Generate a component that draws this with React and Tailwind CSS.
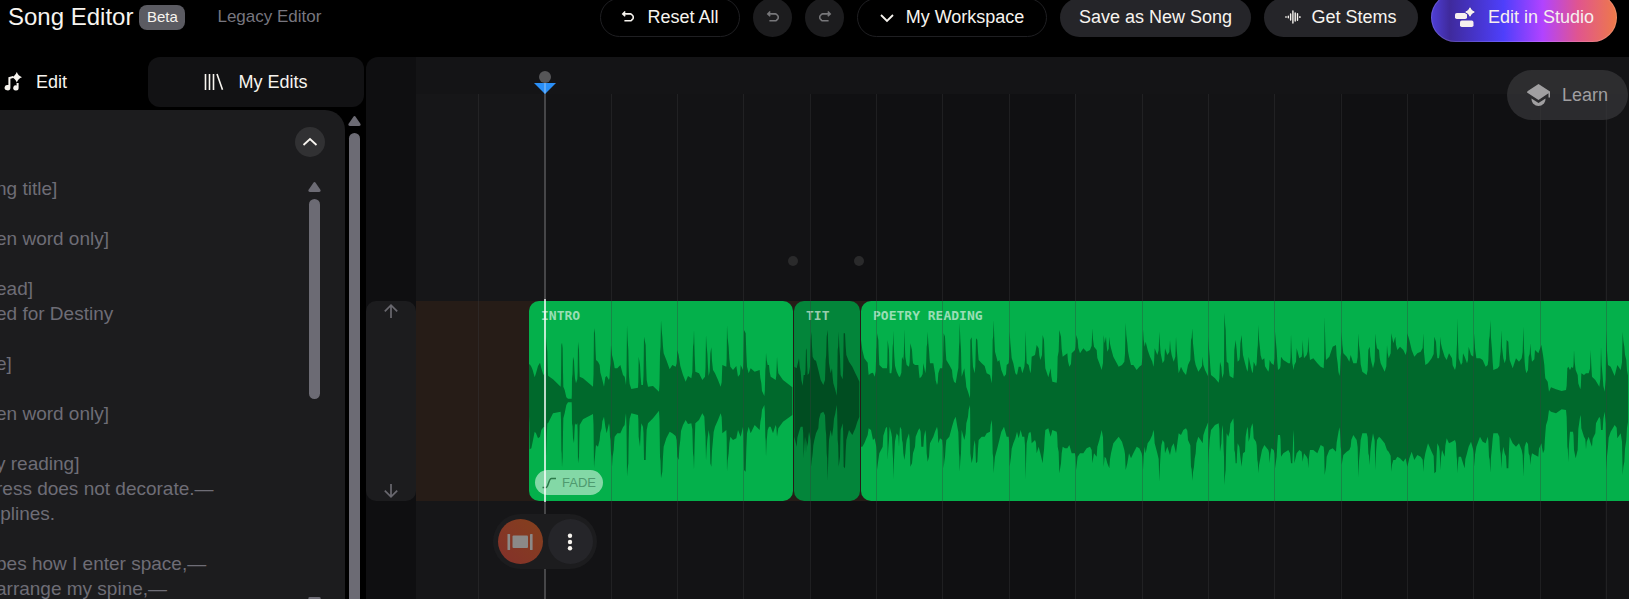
import React from "react";

const INTRO =
  "508,225,380 510,222,478 515,230,475 519,240,455 525,262,425 529,250,430 535,228,445 541,218,440 545,235,420 551,255,412 556,250,410 559,140,500 563,185,400 565,257,400 580,268,370 603,290,365 605,165,480 607,158,532 609,175,500 611,290,385 615,300,370 620,322,345 625,326,337 636,326,337 637,265,400 640,200,445 643,212,460 646,265,400 649,280,405 653,268,400 655,155,520 658,180,500 660,260,405 670,265,388 700,290,372 703,115,535 706,130,500 709,210,465 715,215,470 720,225,450 726,262,415 733,290,380 737,262,410 741,258,430 748,270,400 751,235,440 754,165,490 757,195,530 762,215,480 765,235,440 773,235,430 782,225,430 790,255,412 795,260,405 799,285,370 802,105,560 806,180,520 808,260,410 815,297,370 835,293,375 837,200,440 841,225,470 845,285,400 850,285,410 853,140,510 858,165,510 861,270,420 865,290,400 880,288,385 898,305,362 901,190,500 904,90,565 908,140,545 912,190,470 920,210,445 930,238,425 938,225,430 948,230,438 953,180,500 957,195,510 962,228,450 970,255,405 978,275,390 985,258,402 995,265,400 1000,170,490 1003,120,540 1007,245,400 1018,250,390 1028,270,370 1036,260,420 1039,135,512 1043,190,450 1047,258,420 1052,190,520 1055,172,530 1060,240,450 1066,250,410 1075,270,390 1083,290,370 1088,225,430 1100,230,420 1102,105,545 1107,170,490 1112,230,440 1120,240,450 1130,228,445 1135,260,420 1143,225,440 1150,240,410 1153,120,540 1158,130,545 1162,230,430 1167,250,410 1173,235,430 1185,245,405 1200,240,420 1205,280,380 1214,318,345 1217,240,440 1219,188,500 1224,225,420 1228,225,410 1233,260,410 1240,265,430 1248,270,405 1252,200,440 1256,250,415 1270,270,395 1298,292,375";

const TITLE =
  "43,380,590 50,385,620 57,355,575 62,395,560 68,437,560 71,405,655 75,405,590 78,325,640 80,330,600 83,405,620 87,400,575 92,300,600 94,275,680 98,350,640 103,360,600 108,362,580 115,390,565 122,420,520 130,435,515 137,360,570 140,290,640 143,270,722 147,370,600 152,400,570 156,385,590 160,430,560 166,450,520 170,467,495 173,330,600 176,275,680 180,350,650 182,405,570 188,418,550 191,280,680 195,280,685 199,345,600 207,365,570 217,380,585 226,400,565 232,412,545 238,425,530";

const POETRY_A =
  "243,300,620 247,330,620 253,355,610 263,368,585 266,405,565 273,400,570 279,398,600 284,410,595 289,330,620 291,280,690 295,300,660 298,375,640 308,385,620 317,385,565 321,385,560 323,300,660 327,330,600 329,400,560 334,400,580 338,320,640 340,272,718 343,350,640 350,395,580 357,410,620 360,410,560 366,350,600 370,360,640 373,268,660 376,350,640 380,375,600 387,380,580 391,310,680 396,330,670 399,370,640 405,375,620 415,375,570 419,415,565 424,410,620 430,370,620 436,400,570 440,320,640 443,275,665 447,330,650 450,370,610 460,370,590 465,400,575 471,435,560 475,400,610 480,385,595 487,385,600 491,280,685 495,290,650 499,360,600 508,375,590 516,390,560 522,425,540 527,430,530 532,400,560 537,320,640 539,248,695 543,330,640 545,410,570 553,385,600 557,420,580 564,455,530 570,475,495 571,300,640 575,292,670 579,380,650 584,400,600 588,295,670 592,300,665 596,360,600 605,370,590 614,378,590 620,400,580 630,405,575 635,430,540 638,300,640 641,240,700 645,335,650 653,365,620 658,360,600 664,390,575 672,410,560 680,375,590 686,370,590 689,275,680 693,330,650 700,370,610 706,400,595 711,405,575 716,380,595 722,380,570 727,400,590 733,380,590 737,272,718 740,370,610 746,375,580 751,400,575 755,350,610 765,345,600 770,315,640 776,325,620 781,360,640 788,285,670 792,300,630 796,385,570 805,412,565 812,385,590 817,425,570 830,428,575 833,350,620 838,270,700 843,290,670 848,350,620 855,345,625 862,340,625 868,380,615 875,340,640 885,330,640 889,285,690 893,300,650 900,340,640 910,325,640 920,335,625 930,330,620 937,265,670 942,320,640 950,330,650 958,370,600 965,390,570 971,285,680 974,310,650 978,290,655 982,335,670 988,290,685 993,325,640 1000,350,610 1008,365,600 1016,380,590 1026,375,605 1033,365,630 1037,248,690 1042,310,670 1047,350,640 1053,375,655 1060,375,640 1070,390,620 1078,380,625 1085,375,640 1089,268,690 1094,320,620 1097,305,640 1103,330,610 1110,350,600 1117,365,585 1120,380,570 1124,325,610 1132,345,640 1138,275,725 1142,340,640 1148,370,600 1155,325,640 1162,345,620 1170,300,645 1175,345,620 1181,365,610 1188,290,640 1192,350,610 1196,400,580 1203,380,585 1210,395,570 1218,405,565 1224,375,600 1233,300,680 1237,265,722 1242,340,680 1247,375,640 1255,395,590 1262,385,600 1268,350,610 1275,390,570 1285,410,545";

const POETRY_B =
  "25,140,525 29,200,450 33,255,420 45,265,405 56,278,400 60,215,485 64,230,460 67,265,405 71,250,480 73,68,585 77,120,540 80,215,430 85,220,440 89,258,425 100,265,385 103,180,480 107,150,520 110,180,520 113,215,460 118,210,470 121,160,500 125,135,530 129,195,490 135,220,485 142,245,410 146,200,455 150,220,440 157,250,400 161,215,445 168,230,455 172,180,510 175,105,550 180,175,510 186,210,480 193,205,465 205,245,480 209,210,520 214,220,475 221,225,480 226,125,535 230,180,500 234,240,435 240,235,435 243,200,500 250,210,490 265,220,480 270,220,490 273,133,520 277,220,520 281,240,420 283,225,520 290,175,490 298,205,480 305,200,485 308,150,515 312,205,490 320,195,500 325,140,535 330,210,480 340,205,480 352,220,490 362,230,465 371,235,470 374,80,555 378,210,530 388,200,480 398,170,475 408,165,485 413,220,440 418,258,412 422,200,470 425,125,525 430,190,495 440,200,485 448,215,480 452,195,470 460,220,435 470,220,450 475,130,562 480,190,480 487,245,430 500,255,430 505,180,490 509,170,525 514,215,460 519,235,430 526,130,540 531,175,450 537,180,440 542,220,445 554,245,460 561,165,480 566,205,485 574,130,545 580,160,510 586,140,510 592,180,500 600,170,505 610,180,515 617,195,505 622,130,530 628,150,505 635,180,485 643,200,510 652,190,495 662,185,500 670,130,545 676,225,490 684,220,460 695,205,485 703,140,550 708,155,545 712,205,460 717,205,470 721,140,540 726,175,480 734,200,500 740,210,445 747,190,460 756,205,455 765,240,450 770,180,500 772,85,550 776,205,500 783,225,500 789,190,520 794,200,535 801,220,490 806,170,470 813,195,455 820,200,480 823,130,530 829,205,470 840,205,440 848,210,455 857,230,460 863,225,440 867,150,500 871,90,548 876,180,470 880,240,430 893,235,430 900,200,480 904,120,535 910,205,470 914,220,490 920,150,535 925,155,535 929,210,440 938,235,460 948,205,470 957,215,460 965,205,480 970,110,560 974,215,470 979,250,455 986,200,490 991,160,525 996,215,490 1005,180,495 1015,190,500 1024,165,460 1029,195,490 1033,225,480 1036,265,430 1043,275,390 1047,305,360 1053,292,365 1068,298,370 1085,303,358 1098,300,360 1102,235,470 1105,230,517 1110,240,425 1115,230,425 1119,235,425 1122,180,480 1127,240,505 1133,255,480 1141,298,375 1144,250,415 1152,255,440 1158,250,478 1166,250,440 1172,180,460 1176,260,470 1186,270,430 1198,290,380 1203,170,420 1208,260,420 1214,305,365 1219,118,540 1224,225,470 1232,230,425 1244,258,405 1252,225,445 1262,240,430 1268,125,555 1273,170,515 1279,210,450 1285,262,390";

// Narrows steep transients so that each peak stays a thin needle.
function sharpen(points, sign) {
  const out = [];
  points.forEach(([x, y], i) => {
    out.push([x, y]);
    const next = points[i + 1];
    if (!next) return;
    const [nx, ny] = next;
    const rise = (ny - y) * sign;
    if (Math.abs(rise) < 35) return;
    const reach = Math.min(2, (nx - x) / 2);
    if (rise > 0) out.push([nx - reach, y + (ny - y) * 0.2]);
    else out.push([x + reach, ny + (y - ny) * 0.4]);
  });
  return out;
}

// Turns "x,top,bottom" samples into a closed envelope outline.
function envelope(samples, dx = 0, dy = 0) {
  const pts = samples.split(" ").map((s) => s.split(",").map(Number));
  const upper = sharpen(pts.map(([x, t]) => [x + dx, t + dy]), -1);
  const lower = sharpen(pts.map(([x, , b]) => [x + dx, b + dy]), 1).reverse();
  return `M${upper.join("L")}L${lower.join("L")}Z`;
}

const LYRICS = [
  "ng title]", "", "en word only]", "", "ead]", "ed for Destiny", "", "e]", "",
  "en word only]", "", "y reading]", "ress does not decorate.—", "iplines.", "",
  "bes how I enter space,—", "arrange my spine,—",
];

const BEAT = 66.35;
const GRID = Array.from({ length: 40 }, (_, i) => Math.round(62 + i * BEAT));

const SPARK = "M0 -6Q1.500 -1.500 6 0Q1.500 1.500 0 6Q-1.500 1.500 -6 0Q-1.500 -1.500 0 -6Z";

function UndoIcon({ className }) {
  return (
    <svg className={className} width="14" height="14" viewBox="0 0 14 14" fill="none" stroke="currentColor" strokeWidth="1.6">
      <path d="M4.200 1.500 1.800 3.900l2.400 2.400M2 3.900h7.400a1.500 1.500 0 0 1 1 .4l1.400 1.400a1.500 1.500 0 0 1 .4 1v1.200a1.500 1.500 0 0 1-.4 1l-1.400 1.400a1.500 1.500 0 0 1-1 .4H3.400" />
    </svg>
  );
}

function Triangle({ className }) {
  return (
    <svg className={className} width="13" height="10" viewBox="0 0 13 10" fill="#6c6b74">
      <path d="M5.4.7q1.1-1.2 2.2 0l4.8 7q.9 2.3-1.2 2.3H1.8Q-.3 10 .6 7.7z" />
    </svg>
  );
}

function Clip({ label, clipClass, waveClass, width, viewBox, paths, children }) {
  return (
    <div className={`relative h-full overflow-hidden ${clipClass}`}>
      <svg className={`block h-full ${waveClass}`} width={width} height="200" viewBox={viewBox} fill="currentColor" preserveAspectRatio="none">
        {paths.map((d) => <path key={d.slice(0, 20)} d={d} />)}
      </svg>
      <span className="absolute left-3 top-[7px] font-['DejaVu_Sans_Mono',monospace] text-[13px] leading-4 font-bold text-white/60 whitespace-nowrap">
        {label}
      </span>
      {children}
    </div>
  );
}

function Header() {
  const pill = "flex h-[39px] shrink-0 items-center justify-center rounded-full text-lg whitespace-nowrap";
  return (
    <header className="flex h-[57px] shrink-0 pb-[23px]">
      <div className="flex h-[34px] items-center pl-2">
        <h1 className="text-2xl whitespace-nowrap">Song Editor</h1>
        <span className="ml-1.5 flex h-[25px] w-[46px] items-center justify-center rounded-lg bg-[#5b5b62] text-[15px]">Beta</span>
        <a href="#legacy" className="ml-8 text-[17px] text-[#77767f] whitespace-nowrap">Legacy Editor</a>
      </div>
      <div className="ml-auto flex h-[34px] items-center gap-[13px] pr-3">
        <button className={`${pill} w-[140px] gap-3 border border-[#1f1f22]`}>
          <UndoIcon />Reset All
        </button>
        <button aria-label="Undo" className={`${pill} w-[39px] bg-[#1c1c1e] text-[#77777a]`}><UndoIcon /></button>
        <button aria-label="Redo" className={`${pill} w-[39px] bg-[#1c1c1e] text-[#77777a]`}><UndoIcon className="-scale-x-100" /></button>
        <button className={`${pill} w-[190px] gap-3 border border-[#1f1f22]`}>
          <svg width="14" height="14" viewBox="0 0 14 14" fill="none" stroke="currentColor" strokeWidth="1.800"><path d="m1 5 6 6 6-6" /></svg>
          My Workspace
        </button>
        <button className={`${pill} w-[191px] bg-[#252529]`}>Save as New Song</button>
        <button className={`${pill} w-[154px] gap-2.5 bg-[#252529]`}>
          <svg width="16" height="16" viewBox="0 0 16 16" fill="none" stroke="currentColor" strokeWidth="1.400" strokeLinecap="round">
            <path d="M1 7.800v.4M3.300 7.200v1.600M5.600 5v6M7.900 2v12M10.200 4v8M12.500 4.800v6.400M14.900 7.600v.8" />
          </svg>
          Get Stems
        </button>
        <button className="flex h-[49px] w-[186px] shrink-0 items-center justify-center gap-3 rounded-full border border-white/15 bg-[linear-gradient(90deg,#4f3fd8_0%,#3f2a9c_10%,#4e3ffb_39%,#b143ff_60%,#e0558f_79%,#ee7a48_100%)] bg-origin-border text-lg whitespace-nowrap text-[#f6efee]">
          <svg width="22" height="22" viewBox="0 0 22 22" fill="currentColor">
            <rect x="1" y="7" width="12" height="6" rx="1.8" />
            <rect x="6" y="14.6" width="13.5" height="6.4" rx="1.8" />
            <path stroke="#4030b4" d="M16 0Q17.400 4.600 22 6 17.400 7.400 16 12 14.600 7.400 10 6 14.600 4.600 16 0Z" />
          </svg>
          Edit in Studio
        </button>
      </div>
    </header>
  );
}

function Sidebar() {
  return (
    <aside className="flex w-[366px] shrink-0 flex-col">
      <div className="flex h-[50px] shrink-0 pr-0.5">
        <button className="flex flex-1 items-center gap-3.5 pl-0.5 text-lg">
          <svg width="20" height="20" viewBox="0 0 20 20" fill="currentColor">
            <path d="M6.400 5.200 11 4v2L8.400 6.800v8.900a2.900 2.700 0 1 1-2-2.600z" />
            <path d="M14.600 11h2v4.900a2.700 2.500 0 1 1-2-2.400z" />
            <path d={SPARK} transform="translate(14.8 5.200) scale(.88)" />
          </svg>
          Edit
        </button>
        <button className="flex w-[216px] items-center justify-center gap-3.5 rounded-xl bg-[#121214] text-lg">
          <svg width="20" height="18" viewBox="0 0 20 18" fill="none" stroke="currentColor" strokeWidth="1.6">
            <path d="M1.500 1v16M5.500 1v16M9.500 1v16M13 1l5.500 15.800" />
          </svg>
          My Edits
        </button>
      </div>
      <div className="mt-[3px] flex min-h-0 flex-1">
        <section className="flex w-[345px] flex-col overflow-hidden rounded-tr-[20px] bg-[#1c1c1e]">
          <div className="flex justify-end pt-[17px] pr-5">
            <button aria-label="Collapse" className="flex size-[30px] items-center justify-center rounded-full bg-[#313133]">
              <svg width="16" height="10" viewBox="0 0 16 10" fill="none" stroke="currentColor" strokeWidth="1.800"><path d="m1.500 8 6.500-6 6.500 6" /></svg>
            </button>
          </div>
          <div className="mt-[18px] flex min-h-0 flex-1">
            <div className="-ml-1 flex-1 overflow-hidden pt-px text-[19px] leading-[25px] text-[#6e6d76]">
              {LYRICS.map((line, i) => <p key={i} className="h-[25px] whitespace-nowrap">{line}</p>)}
            </div>
            <div className="flex w-[13px] flex-col items-center pt-[7px] mr-6">
              <Triangle />
              <div className="mt-[7px] h-[200px] w-[11px] shrink-0 rounded-full bg-[#6c6b74]" />
              <Triangle className="mt-auto shrink-0 translate-y-2 rotate-180" />
            </div>
          </div>
        </section>
        <div className="flex w-[13px] flex-col items-center ml-[3px] pt-1.5">
          <Triangle className="shrink-0" />
          <div className="mt-[7px] w-[11px] flex-1 rounded-t-full bg-[#6c6b74]" />
        </div>
      </div>
    </aside>
  );
}

function Gutter() {
  return (
    <div className="w-[50px] shrink-0 rounded-tl-xl bg-[#0f0f11] pt-[244px]">
      <div className="flex h-[200px] flex-col items-center justify-between rounded-[10px] bg-[#1c1c1e] py-[3px] text-[#69686f]">
        <svg width="14" height="14" viewBox="0 0 14 14" fill="none" stroke="currentColor" strokeWidth="1.700"><path d="M7 14V1.200M.8 7.400 7 1.200l6.200 6.200" /></svg>
        <svg width="14" height="14" viewBox="0 0 14 14" fill="none" stroke="currentColor" strokeWidth="1.700"><path d="M7 0v12.800M.8 6.600 7 12.800l6.200-6.200" /></svg>
      </div>
    </div>
  );
}

function Timeline() {
  return (
    <main className="relative min-w-0 flex-1 overflow-hidden bg-[#141416] pt-[244px]">
      {/* alternating bar shading */}
      <div className="absolute inset-x-0 top-[37px] bottom-0 flex">
        <div className="w-[129px] shrink-0 bg-[#161618]" />
        {[0, 1, 2, 3, 4, 5, 6, 7].map((i) => (
          <div key={i} className={`w-[265px] shrink-0 ${i % 2 ? "bg-[#101012]" : "bg-[#131315]"}`} />
        ))}
      </div>

      <div className="relative flex h-[200px] gap-px bg-[#261c17] pl-[113px]">
        <Clip label="INTRO" clipClass="w-[264px] shrink-0 rounded-[10px] bg-[#04b04b]" waveClass="text-[#00692c]" width="264" viewBox="508 33 792 600" paths={[envelope(INTRO)]}>
          <button className="absolute left-1.5 bottom-1.5 flex h-[25px] w-[68px] items-center justify-center gap-1.5 rounded-full bg-[#83d8a6] text-[13px] text-[#4f9a6f]">
            <svg width="14" height="12" viewBox="0 0 14 12" fill="none" stroke="#2c7a4a" strokeWidth="1.500"><path d="M.5 10.500H4c2.500 0 2.500-9 5.500-9H14" /></svg>
            FADE
          </button>
        </Clip>
        <Clip label="TIT" clipClass="w-[66px] shrink-0 rounded-[10px] bg-[#03853a]" waveClass="text-[#004d21]" width="66" viewBox="42 183 198 600" paths={[envelope(TITLE)]} />
        <Clip label="POETRY READING" clipClass="min-w-0 flex-1 rounded-l-[10px] bg-[#04b04b]" waveClass="text-[#00692c]" width="767" viewBox="243 183 2301 600" paths={[envelope(POETRY_A), envelope(POETRY_B, 1260, 150)]} />
      </div>

      {/* beat lines over the clips */}
      <div className="pointer-events-none absolute inset-x-0 top-[37px] bottom-0">
        {GRID.filter((_, i) => i !== 1).map((x) => (
          <div key={x} className="absolute inset-y-0 w-px bg-[#3c3c40]/35" style={{ left: x }} />
        ))}
      </div>

      <div className="absolute left-[372px] top-[199px] size-2.5 rounded-full bg-[#2a2a2b]" />
      <div className="absolute left-[438px] top-[199px] size-2.5 rounded-full bg-[#2a2a2b]" />

      {/* playhead */}
      <div className="pointer-events-none absolute left-[118px] top-3.5 bottom-0 flex w-[22px] flex-col items-center">
        <div className="size-3 shrink-0 rounded-full bg-[#565658]" />
        <svg className="shrink-0" width="22" height="11" viewBox="0 0 22 11"><path d="M0 0h22L11 11z" fill="#2a8ff7" /><path d="M10 0h2v10l-1 1-1-1z" fill="#5fa9f5" /></svg>
        <div className="h-[205px] w-0.5 shrink-0 bg-[#464648]" />
        <div className="h-[203px] w-0.5 shrink-0 bg-white/75" />
        <div className="w-0.5 flex-1 bg-[#464648]" />
      </div>

      {/* clip actions */}
      <div className="absolute left-[77px] top-[457px] flex h-[55px] w-[104px] items-center justify-center gap-[5px] rounded-full bg-[#1c1c1e]">
        <button aria-label="Fit selection" className="flex size-[45px] items-center justify-center rounded-full bg-linear-to-tr from-[#84302a] to-[#84401c]">
          <svg width="26" height="16" viewBox="0 0 26 16" fill="#8b8988"><rect x=".5" y="0" width="2.600" height="16" rx=".6" /><rect x="5.500" y="1.500" width="15.500" height="12.500" rx="1" /><rect x="23" y="0" width="2.600" height="16" rx=".6" /></svg>
        </button>
        <button aria-label="More" className="flex size-[45px] items-center justify-center rounded-full bg-[#252529]">
          <svg width="6" height="18" viewBox="0 0 6 18" fill="currentColor"><circle cx="3" cy="2.700" r="2.200" /><circle cx="3" cy="9" r="2.200" /><circle cx="3" cy="15.300" r="2.200" /></svg>
        </button>
      </div>

      <button className="absolute right-px top-[13px] flex h-[50px] w-[121px] items-center justify-center gap-3 rounded-full bg-[#38383a]/70 text-lg text-[#a09fa1]">
        <svg width="23" height="22" viewBox="0 0 23 22" fill="currentColor">
          <path d="M11.500 0 23 7.500v6h-1.500V9.200l-10 6.800L0 8.500q0-1 .8-1.500z" />
          <path d="M4.500 14.500l7 4.500 7-4.500q.2 3-1.500 5-5.500 5-11 0-1.700-2-1.500-5z" />
        </svg>
        Learn
      </button>
    </main>
  );
}

export default function App() {
  return (
    <div className="flex h-screen flex-col overflow-hidden bg-black font-['Liberation_Sans',Arial,sans-serif] text-[#f7f4ef]">
      <Header />
      <div className="flex min-h-0 flex-1">
        <Sidebar />
        <Gutter />
        <Timeline />
      </div>
    </div>
  );
}
